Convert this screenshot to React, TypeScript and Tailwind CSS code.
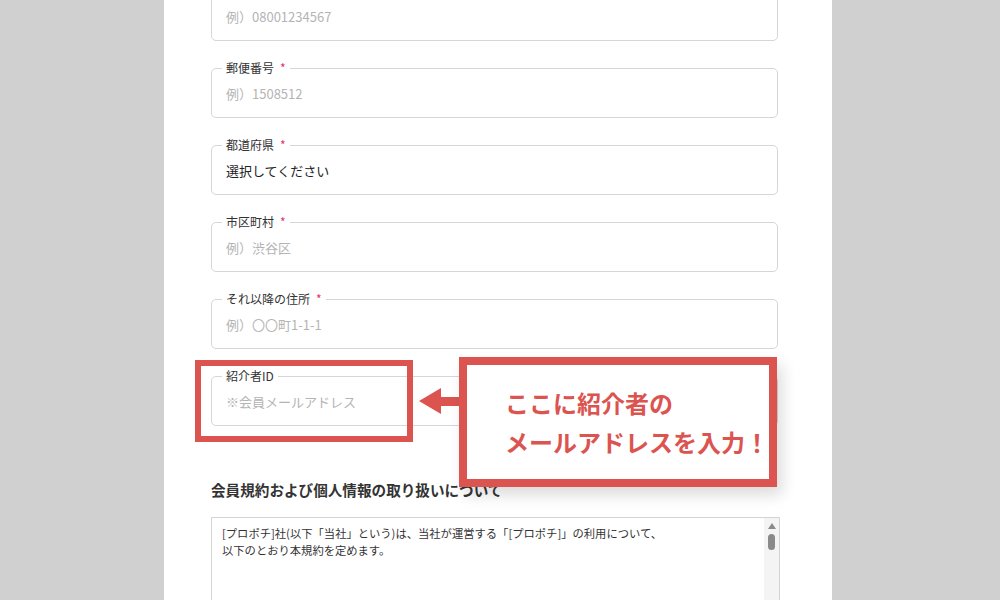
import React from "react";

const JP = { fontFamily: '"Noto Sans CJK JP", "Noto Sans", sans-serif' };

function Field({
  label,
  required,
  value,
  placeholder,
  first,
}: {
  label?: string;
  required?: boolean;
  value?: string;
  placeholder?: string;
  first?: boolean;
}) {
  return (
    <div
      className={
        "relative h-[50px] rounded-[5px] border border-[#d6d6d6] flex items-center pl-[14px] pt-[2px]" +
        (first ? " -mt-[9px]" : "")
      }
    >
      {label && (
        <div className="absolute -top-[9px] left-[10px] bg-white px-[4px] text-[12px] leading-[16px] text-[#333] flex items-center">
          <span>{label}</span>
          {required && <span className="ml-[6px] text-[12px] text-[#e4306e]">*</span>}
        </div>
      )}
      {value ? (
        <span className="text-[13px] text-[#222]">{value}</span>
      ) : (
        <span className="text-[13px] text-[#b4b4b4]">{placeholder}</span>
      )}
    </div>
  );
}

export default function App() {
  return (
    <div className="w-[1000px] h-[600px] bg-[#d0d0d0] overflow-hidden flex" style={JP}>
      <div className="ml-[164px] w-[668px] h-[600px] bg-white relative overflow-hidden">
        <div className="pl-[47px] pr-[54px] flex flex-col gap-[27px]">
          <Field first placeholder="例）08001234567" />
          <Field label="郵便番号" required placeholder="例）1508512" />
          <Field label="都道府県" required value="選択してください" />
          <Field label="市区町村" required placeholder="例）渋谷区" />
          <Field label="それ以降の住所" required placeholder="例）〇〇町1-1-1" />
          <Field label="紹介者ID" placeholder="※会員メールアドレス" />
        </div>

        <div className="pl-[47px] pr-[52px]">
          <h2 className="mt-[54px] text-[14.6px] leading-[20px] font-bold text-[#333]">
            会員規約および個人情報の取り扱いについて
          </h2>
          <div className="mt-[17px] h-[120px] border border-[#d4d4d4] flex">
            <div className="flex-1 pl-[10px] pt-[7px] text-[11.3px] leading-[17px] text-[#333]">
              <p>[プロポチ]社(以下「当社」という)は、当社が運営する「[プロポチ]」の利用について、</p>
              <p>以下のとおり本規約を定めます。</p>
            </div>
            <div className="w-[15px] bg-[#f4f4f4] flex flex-col items-center pt-[5px]">
              <div className="w-0 h-0 border-l-[4px] border-r-[4px] border-b-[6px] border-l-transparent border-r-transparent border-b-[#8a8a8a]" />
              <div className="mt-[5px] w-[7px] h-[16px] rounded-full bg-[#8a8a8a]" />
            </div>
          </div>
        </div>

        {/* annotation: highlight box */}
        <div className="absolute left-[31px] top-[360px] w-[218px] h-[82px] border-[6px] border-[#dc5450]" />

        {/* annotation: arrow */}
        <svg className="absolute left-[254px] top-[386px]" width="44" height="30" viewBox="0 0 44 30">
          <polygon points="1,15 23,2 23,11 44,11 44,20 23,20 23,28" fill="#dc5450" />
        </svg>

        {/* annotation: callout */}
        <div className="absolute left-[295px] top-[357px] w-[318px] h-[130px] border-[8px] border-[#dc5450] bg-white shadow-[5px_8px_14px_rgba(0,0,0,0.14)] pl-[38px] pt-[18px]">
          <div className="text-[24px] leading-[39px] font-bold text-[#dc5450] whitespace-nowrap">
            <p>ここに紹介者の</p>
            <p>メールアドレスを入力！</p>
          </div>
        </div>
      </div>
    </div>
  );
}
